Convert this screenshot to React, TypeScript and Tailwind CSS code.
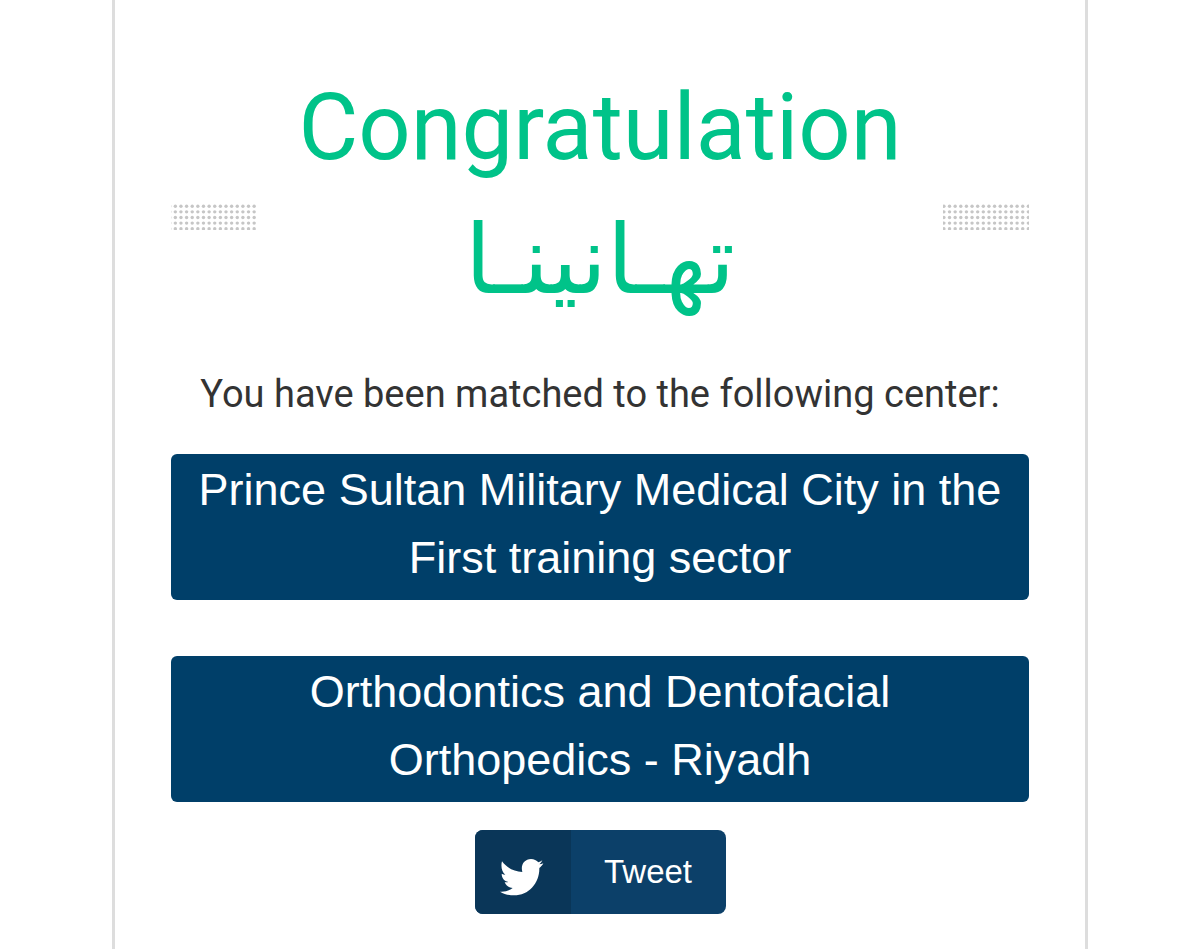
const matches = [
  'Prince Sultan Military Medical City in the First training sector',
  'Orthodontics and Dentofacial Orthopedics - Riyadh',
]

const pitch = 5.63

// Dotted strip on either side of the heading
function Dots({ start }: { start: number }) {
  const columns = Array.from({ length: 16 }, (_, i) => start + i * pitch)
  const rows = Array.from({ length: 5 }, (_, i) => 2.2 + i * pitch)

  return (
    <svg className="mt-[142px] h-[26px] w-[86px] shrink-0" viewBox="0 0 86 26" aria-hidden="true">
      {rows.map((y) =>
        columns.map((x) => <circle key={`${x}-${y}`} cx={x} cy={y} r="1.7" fill="#c6c6c6" />)
      )}
    </svg>
  )
}

function Bird() {
  return (
    <svg className="h-[38px] w-[45px]" viewBox="28 26 135 114" fill="currentColor" aria-hidden="true">
      <path d="M37 36C52 56 73 66 98 68C92 46 104 30 124 29C133 29 141 33 146 39C150 38 154 36 158 33C156 38 153 42 149 45C153 45 157 44 161 42C158 48 154 52 149 56C150 100 118 138 73 138C57 138 43 134 31 127C46 128 59 124 69 116C56 115 48 108 45 98C49 99 52 99 56 98C44 95 36 86 36 73C40 75 43 76 47 76C36 67 33 50 37 36Z" />
    </svg>
  )
}

export default function App() {
  return (
    <div className="min-h-screen bg-white px-28 font-['Liberation_Sans',Arial,sans-serif]">
      <main className="flex min-h-screen flex-col items-center border-x-3 border-[#dddddd] px-14 pt-[62px] pb-[34px]">
        <div className="flex w-full justify-between">
          <Dots start={-1.3} />
          <h1 className="text-center font-['Roboto','DejaVu_Sans',sans-serif] leading-[132px] text-[#00c389]">
            <span className="block text-[92px]">Congratulation</span>
            <span className="block text-[96px]" lang="ar" dir="rtl">تهـانينـا</span>
          </h1>
          <Dots start={0.9} />
        </div>

        <p className="mt-[42px] font-['Roboto',sans-serif] text-[38px] leading-[52px] text-[#333333]">
          You have been matched to the following center:
        </p>

        <div className="mt-[34px] flex w-full flex-col gap-14">
          {matches.map((match) => (
            <div
              key={match}
              className="rounded-md bg-[#003f69] px-5 pt-[2px] pb-2 text-center text-[45px] leading-[68px] text-white"
            >
              {match}
            </div>
          ))}
        </div>

        <button className="mt-7 flex h-[84px] overflow-hidden rounded-lg bg-[#0c4069] text-[33px] text-white">
          <span className="flex h-full w-24 items-center justify-center bg-[#0a3658] pt-2.5 pr-0.5">
            <Bird />
          </span>
          <span className="flex h-full w-[155px] items-center justify-center">Tweet</span>
        </button>
      </main>
    </div>
  )
}
